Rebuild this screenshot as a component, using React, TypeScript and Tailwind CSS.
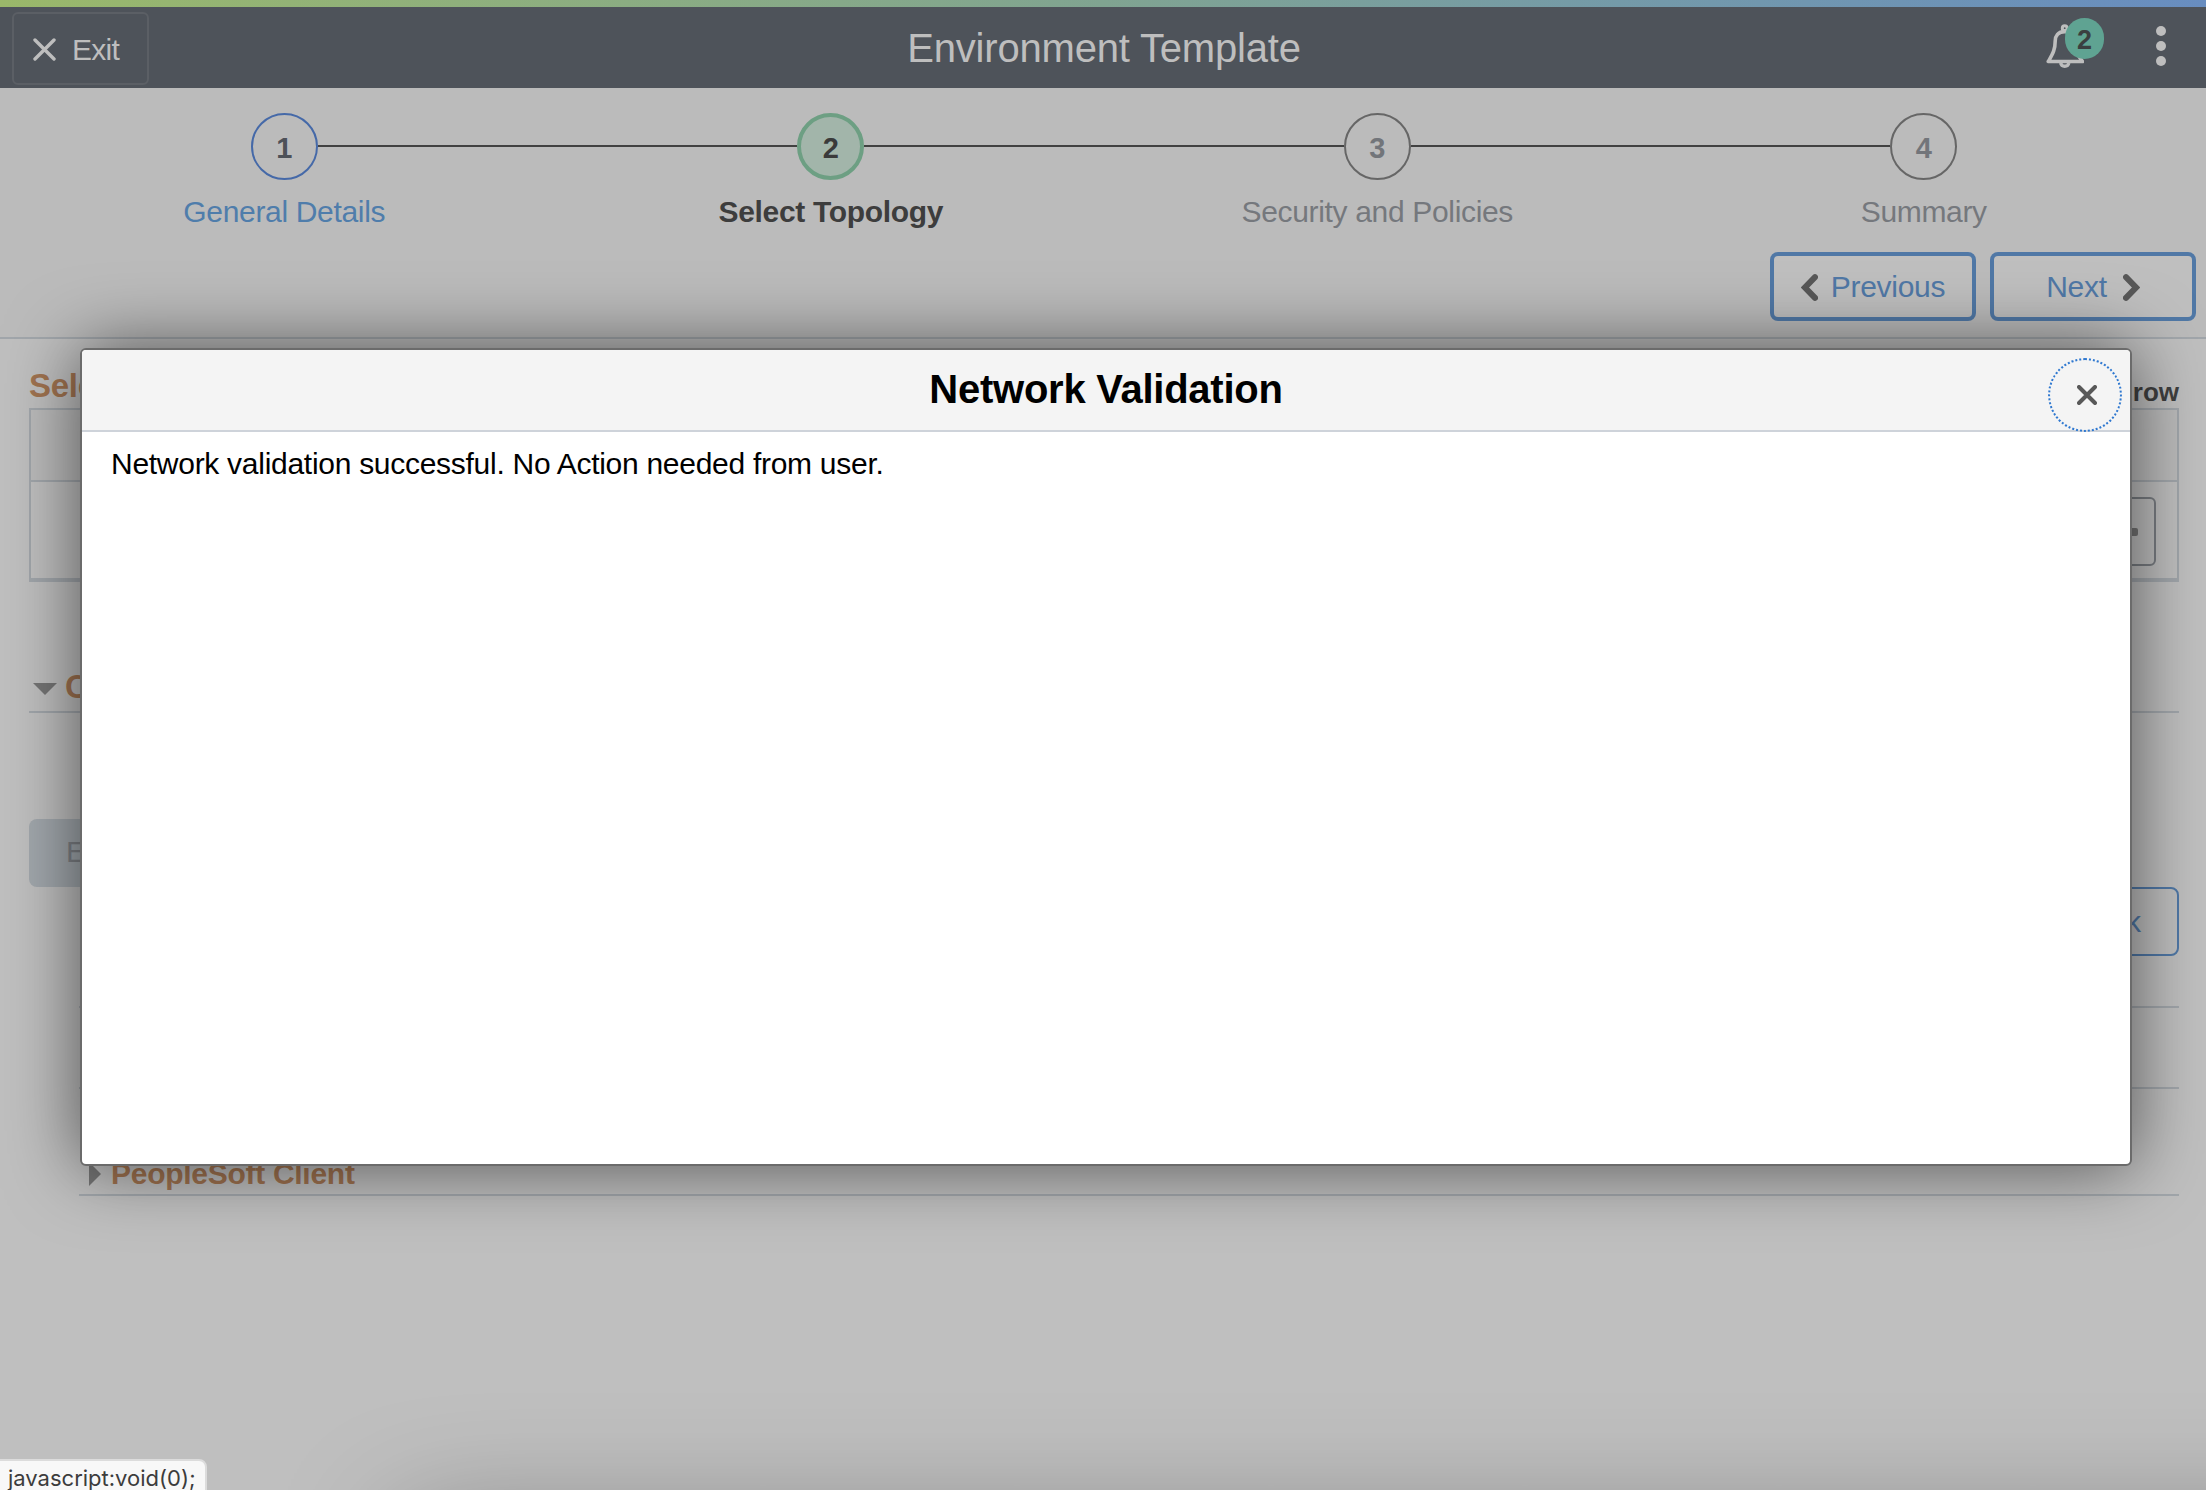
import React from "react";

const steps = [
  { n: 1, label: "General Details", circle: "border-2 border-[#4569a8] text-[#4d5158]", text: "text-[#4f7dab]" },
  { n: 2, label: "Select Topology", circle: "border-4 border-[#6d9f83] bg-[#a2b5aa] text-[#3a3a3a]", text: "text-[#3d3d3d] font-bold" },
  { n: 3, label: "Security and Policies", circle: "border-2 border-[#666] text-[#72757a]", text: "text-[#75787d]" },
  { n: 4, label: "Summary", circle: "border-2 border-[#666] text-[#72757a]", text: "text-[#75787d]" },
];

function Header() {
  return (
    <header className="flex h-[88px] flex-col">
      <div className="h-[7px] bg-gradient-to-r from-[#9ab86a] via-[#80a491] to-[#688dc0]" />
      <div className="grid flex-1 grid-cols-3 items-center bg-[#4e535a] text-[#bebebe]">
        <button className="ml-3 mt-[2px] flex h-[73px] w-[137px] items-center rounded-md border-2 border-[#5b5f65] pl-[19px] text-[30px]">
          <svg className="mt-px" width="23" height="23" viewBox="0 0 23 23" fill="none" stroke="currentColor" strokeWidth="3.4" strokeLinecap="round">
            <path d="M2 2L21 21M21 2L2 21" />
          </svg>
          <span className="ml-[16px] pt-[2px] leading-none tracking-[-0.7px]">Exit</span>
        </button>
        <h1 className="pl-[2px] text-center text-[40px] leading-none tracking-[-0.18px]">Environment Template</h1>
        <div className="flex items-start justify-end self-start pr-[40px] pt-[11px]">
          <div className="flex w-[58px] items-start">
            <svg className="mt-[6px]" width="38" height="46" viewBox="0 0 38 46" fill="none" stroke="currentColor" strokeWidth="3.6" strokeLinejoin="round">
              <circle cx="18.7" cy="4.200" r="2.400" strokeWidth="3" />
              <path d="M18.700 7.600C12 7.600 9.200 12 9.200 17C9.200 26 6.500 30 2.300 37.500H36.500C31 30 28.200 26 28.200 17C28.200 12 25.500 7.600 18.700 7.600Z" />
              <path d="M14.700 39C15.500 43.300 22 43.300 22.800 39" strokeWidth="3.400" />
            </svg>
            <span className="-ml-[19px] flex h-[41px] w-[39px] shrink-0 items-center justify-center rounded-full bg-[#5fa392] pt-[3px] text-[27px] font-bold text-[#3a3f40]">2</span>
          </div>
          <div className="ml-[52px] mt-[8px] flex flex-col gap-[5px]">
            <i className="size-[10px] rounded-full bg-current" />
            <i className="size-[10px] rounded-full bg-current" />
            <i className="size-[10px] rounded-full bg-current" />
          </div>
        </div>
      </div>
    </header>
  );
}

function Steps() {
  return (
    <nav className="h-[251px] border-b-2 border-[#a1a6ab] bg-[#bbbbbb] pt-[25px]">
      <ol className="ml-[11px] mr-[9px] grid grid-cols-4">
        {steps.map((s) => (
          <li key={s.n} className="flex flex-col items-center">
            <div className="flex w-full items-center">
              <span className={s.n === 1 ? "h-[2px] flex-1" : "mb-[2px] h-[2px] flex-1 bg-[#414141]"} />
              <span className={`flex size-[67px] items-center justify-center rounded-full pt-[4px] text-[29px] font-bold ${s.circle}`}>{s.n}</span>
              <span className={s.n === 4 ? "h-[2px] flex-1" : "mb-[2px] h-[2px] flex-1 bg-[#414141]"} />
            </div>
            <span className={`mt-[14px] text-[30px] leading-[36px] tracking-[-0.33px] ${s.text}`}>{s.label}</span>
          </li>
        ))}
      </ol>
      <div className="mr-[10px] mt-[22px] flex justify-end gap-[14px] text-[30px] tracking-[-0.3px] text-[#5078a6]">
        <button className="flex h-[69px] w-[206px] items-center justify-center rounded-lg border-4 border-[#5078a6] bg-[#bfbfbf]">
          <svg className="mr-[13px] mt-px" width="17" height="27" viewBox="0 0 17 27" fill="none" stroke="#585858" strokeWidth="6" strokeLinecap="round"><path d="M14 3.200L4 13.500L14 23.800" /></svg>
          Previous
        </button>
        <button className="flex h-[69px] w-[206px] items-center justify-center rounded-lg border-4 border-[#5078a6] bg-[#bfbfbf]">
          Next
          <svg className="ml-[16px] mt-px" width="17" height="27" viewBox="0 0 17 27" fill="none" stroke="#585858" strokeWidth="6" strokeLinecap="round"><path d="M3 3.200L13 13.500L3 23.800" /></svg>
        </button>
      </div>
    </nav>
  );
}

function PageContent() {
  return (
    <main className="flex flex-col pl-[29px] pr-[27px] pt-[26px]">
      <div className="flex h-[43px] items-start justify-between whitespace-nowrap font-bold">
        <h2 className="text-[33px] leading-[42px] tracking-[-0.3px] text-[#a07350]">Select</h2>
        <span className="pt-[9px] text-[26px] leading-[36px] text-[#3f3f3f]">row</span>
      </div>
      <div className="h-[174px] border-2 border-b-4 border-[#a1a6ab]">
        <div className="h-[72px] border-b-2 border-[#a1a6ab] bg-[#bbbbbb]" />
        <div className="flex justify-end pr-[21px] pt-[15px]">
          <button className="flex h-[69px] w-[70px] items-center justify-end gap-[5px] rounded-md border-2 border-[#797d82] pr-[16px]">
            <i className="size-[8px] rounded-[2px] bg-[#757575]" />
            <i className="size-[8px] rounded-[2px] bg-[#757575]" />
            <i className="size-[8px] rounded-[2px] bg-[#757575]" />
          </button>
        </div>
      </div>
      <div className="mt-[84px] flex h-[47px] items-start border-b-2 border-[#a1a6ab]">
        <svg className="ml-[4px] mt-[17px]" width="24" height="12"><path d="M0 0H24L12 12Z" fill="#757575" /></svg>
        <h2 className="ml-[8px] mt-[2px] text-[33px] font-bold leading-[38px] text-[#a07350]">C</h2>
      </div>
      <button className="mt-[106px] flex h-[68px] w-[160px] items-center rounded-lg bg-[#a2a8ad] pb-[4px] pl-[37px] text-[30px] text-[#7e8186]">E</button>
      <div className="flex justify-end">
        <button className="flex h-[69px] w-[150px] items-center justify-end rounded-lg border-2 border-[#5078a6] pr-[36px] text-[30px] text-[#5078a6]">k</button>
      </div>
      <div className="ml-[50px] h-[52px] border-b-2 border-[#a1a6ab]" />
      <div className="ml-[50px] h-[81px] border-b-2 border-[#a1a6ab]" />
      <div className="ml-[50px] flex h-[107px] items-end border-b-2 border-[#a1a6ab] pb-[3px]">
        <svg className="mb-[5px] ml-[10px]" width="12" height="24"><path d="M0 0V24L12 12Z" fill="#757575" /></svg>
        <h3 className="ml-[10px] text-[30px] font-bold leading-[34px] tracking-[-0.28px] text-[#a07350]">PeopleSoft Client</h3>
      </div>
    </main>
  );
}

function Dialog() {
  return (
    <section
      role="dialog"
      className="absolute left-[80px] top-[348px] flex h-[818px] w-[2052px] flex-col overflow-hidden rounded-[6px] border-2 border-[#6b6b6b] bg-white text-black shadow-[0_0_72px_rgba(0,0,0,0.58)]"
    >
      <div className="grid h-[82px] shrink-0 grid-cols-[90px_1fr_90px] border-b-2 border-[#ced3da] bg-[#f4f4f4]">
        <span />
        <h2 className="pt-[16px] text-center text-[40px] font-bold leading-[46px] tracking-[-0.25px]">Network Validation</h2>
        <button className="ml-[8px] mt-[8px] flex size-[74px] items-center justify-center rounded-full border-2 border-dotted border-[#2f78d0]">
          <svg className="ml-[4px]" width="20" height="20" viewBox="0 0 20 20" fill="none" stroke="#585858" strokeWidth="4" strokeLinecap="round"><path d="M2 2L18 18M18 2L2 18" /></svg>
        </button>
      </div>
      <p className="pl-[29px] pt-[14px] text-[30px] leading-[36px] tracking-[-0.28px]">Network validation successful. No Action needed from user.</p>
    </section>
  );
}

export default function App() {
  return (
    <div className="relative h-[1490px] w-[2206px] overflow-hidden bg-[#bfbfbf] font-['Liberation_Sans',Arial,sans-serif]">
      <Header />
      <Steps />
      <PageContent />
      <Dialog />
      <div className="absolute left-[400px] top-[1525px] h-[200px] w-[2200px] shadow-[0_0_120px_rgba(0,0,0,0.35)]" />
      <div className="absolute -left-[2px] top-[1459px] h-[40px] w-[209px] rounded-tr-lg border-2 border-[#dcdcdc] bg-[#f8f8f8] pl-[8px] pt-[6px] font-['Inter',sans-serif] text-[22px] leading-[23px] text-[#3c3c3c]">
        javascript:void(0);
      </div>
    </div>
  );
}
